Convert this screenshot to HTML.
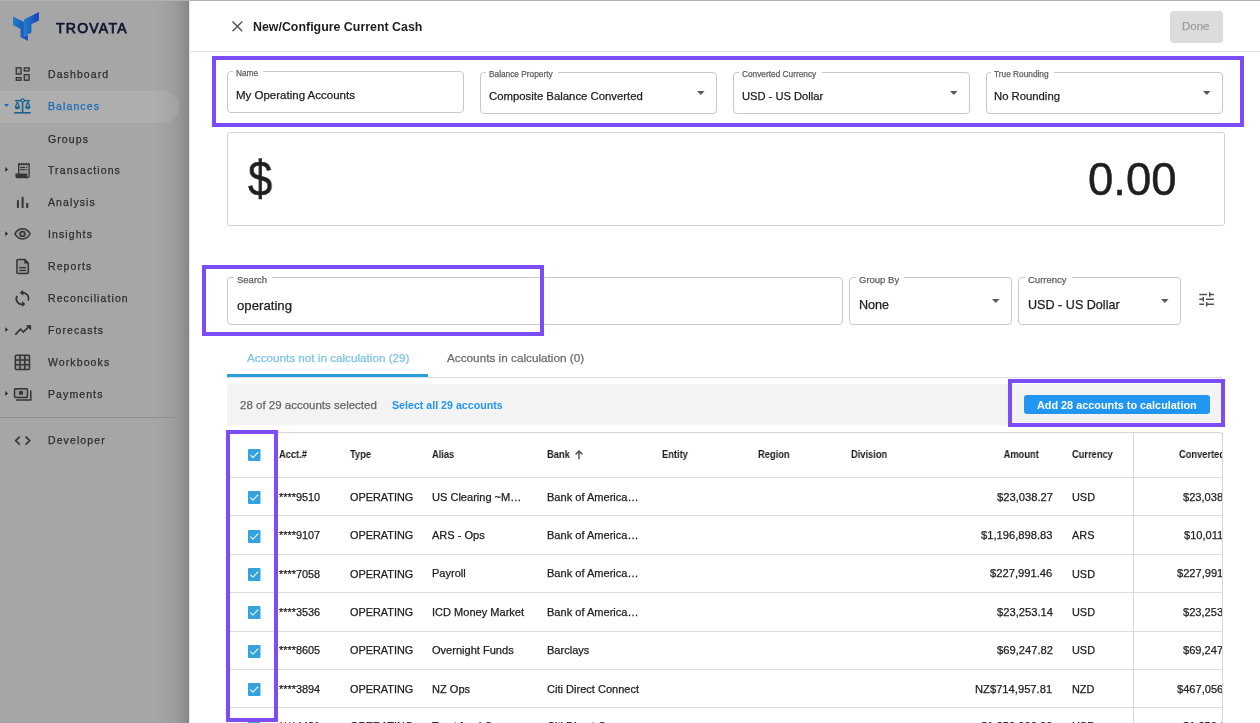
<!DOCTYPE html>
<html><head><meta charset="utf-8"><style>
html,body{margin:0;padding:0;}
body{width:1260px;height:723px;overflow:hidden;position:relative;background:#fff;font-family:"Liberation Sans", sans-serif;}
.t{position:absolute;white-space:nowrap;will-change:transform;}
.n{-webkit-text-stroke:0.25px currentColor;}
.b{position:absolute;}
</style></head><body>
<div class="b" style="left:0;top:0;width:189px;height:723px;background:linear-gradient(to right,#a6a6a6 0px,#a6a6a6 155px,#a2a2a2 165px,#999 178px,#8c8c8c 186px,#858585 189px);"></div>
<div class="b" style="left:0;top:91px;width:179px;height:32px;background:rgba(255,255,255,0.09);border-radius:0 16px 16px 0;"></div>
<svg class="b" style="left:0;top:0" width="60" height="50" viewBox="0 0 60 50">
<defs>
<linearGradient id="g1" x1="0" y1="0" x2="1" y2="0"><stop offset="0" stop-color="#1a7fc6"/><stop offset="1" stop-color="#1f48c2"/></linearGradient>
<linearGradient id="g2" x1="0" y1="0" x2="1" y2="0"><stop offset="0" stop-color="#1b82c6"/><stop offset="1" stop-color="#1f3fc0"/></linearGradient>
</defs>
<polygon fill="url(#g1)" points="13,16.5 23.9,21.9 23.9,35.9 27.9,34.9 27.9,40.9 20.5,36.9 20.5,28.9 13,24.9"/>
<polygon fill="url(#g2)" points="23.9,19.5 38.9,12 38.9,20.5 31.4,24.2 31.4,32.7 23.9,35.9"/>
</svg>
<div class="t n" style="left:56px;top:21.15px;font-size:14px;line-height:14px;font-weight:400;color:#0f1a30;letter-spacing:1.25px;-webkit-text-stroke:0.75px currentColor;">TROVATA</div>
<div class="t n" style="left:48.3px;top:69.11px;font-size:10.5px;line-height:10.5px;font-weight:400;color:#2e2e2e;letter-spacing:1.1px;">Dashboard</div>
<div class="t n" style="left:48.3px;top:101.11px;font-size:10.5px;line-height:10.5px;font-weight:400;color:#1b6cbd;letter-spacing:1.1px;">Balances</div>
<div class="t n" style="left:48.3px;top:134.11px;font-size:10.5px;line-height:10.5px;font-weight:400;color:#2e2e2e;letter-spacing:1.1px;">Groups</div>
<div class="t n" style="left:48.3px;top:165.11px;font-size:10.5px;line-height:10.5px;font-weight:400;color:#2e2e2e;letter-spacing:1.1px;">Transactions</div>
<div class="t n" style="left:48.3px;top:197.11px;font-size:10.5px;line-height:10.5px;font-weight:400;color:#2e2e2e;letter-spacing:1.1px;">Analysis</div>
<div class="t n" style="left:48.3px;top:229.11px;font-size:10.5px;line-height:10.5px;font-weight:400;color:#2e2e2e;letter-spacing:1.1px;">Insights</div>
<div class="t n" style="left:48.3px;top:261.11px;font-size:10.5px;line-height:10.5px;font-weight:400;color:#2e2e2e;letter-spacing:1.1px;">Reports</div>
<div class="t n" style="left:48.3px;top:293.11px;font-size:10.5px;line-height:10.5px;font-weight:400;color:#2e2e2e;letter-spacing:1.1px;">Reconciliation</div>
<div class="t n" style="left:48.3px;top:325.11px;font-size:10.5px;line-height:10.5px;font-weight:400;color:#2e2e2e;letter-spacing:1.1px;">Forecasts</div>
<div class="t n" style="left:48.3px;top:357.11px;font-size:10.5px;line-height:10.5px;font-weight:400;color:#2e2e2e;letter-spacing:1.1px;">Workbooks</div>
<div class="t n" style="left:48.3px;top:389.11px;font-size:10.5px;line-height:10.5px;font-weight:400;color:#2e2e2e;letter-spacing:1.1px;">Payments</div>
<div class="t n" style="left:48.3px;top:435.11px;font-size:10.5px;line-height:10.5px;font-weight:400;color:#2e2e2e;letter-spacing:1.1px;">Developer</div>
<svg class="b" style="left:0;top:0" width="40" height="460" viewBox="0 0 40 460">
<!-- dashboard -->
<g fill="#353535" fill-opacity="0.13" stroke="#353535" stroke-width="1.3">
<rect x="16.25" y="67.85" width="4.8" height="6.2"/><rect x="24.25" y="67.85" width="4.8" height="3.1"/>
<rect x="16.25" y="77.65" width="4.8" height="2.6"/><rect x="24.25" y="74.65" width="4.8" height="5.6"/>
</g>
<!-- balances scale -->
<g fill="#18648f">
<path d="M4.1,104.1 L9,104.1 L6.55,107 Z" fill="#1c66c4"/>
<rect x="14.2" y="112" width="16.5" height="1.6"/>
<rect x="21.8" y="100.5" width="1.6" height="12"/>
<rect x="15.1" y="99.9" width="14.9" height="1.5"/>
</g>
<g fill="none" stroke="#18648f" stroke-width="1.2">
<circle cx="22.6" cy="100.5" r="1.7" fill="#aeaeae"/>
<path d="M17.4,101.8 L15.4,107 M17.4,101.8 L19.4,107"/>
<path d="M27.8,101.8 L25.8,107 M27.8,101.8 L29.8,107"/>
</g>
<g fill="#18648f">
<path d="M14.7,106.6 L20.1,106.6 A2.7,2.7 0 0 1 14.7,106.6 Z"/>
<path d="M25.1,106.6 L30.5,106.6 A2.7,2.7 0 0 1 25.1,106.6 Z"/>
</g>
<!-- carets -->
<g fill="#353535">
<path d="M5.2,167 L8.2,169.5 L5.2,172 Z"/>
<path d="M5.2,231.2 L8.2,233.7 L5.2,236.2 Z"/>
<path d="M5.2,327.3 L8.2,329.6 L5.2,331.9 Z"/>
<path d="M5.2,391 L8.2,393.5 L5.2,396 Z"/>
</g>
<!-- transactions receipt -->
<g fill="#353535">
<path d="M18.6,165 L28.6,165 L28.6,176.5 L27.6,176.5 L27.6,173.4 L18.6,173.4 Z" fill-opacity="0.13"/>
<path d="M18,163.9 L19.1,162.6 L20.3,163.9 L21.5,162.6 L22.7,163.9 L23.9,162.6 L25.1,163.9 L26.3,162.6 L27.5,163.9 L28.7,162.6 L29.8,163.9 L29.8,176 Q29.8,178.2 27.6,178.2 L17.3,178.2 Q15.4,178.2 15.4,176.3 L15.4,173.4 L18,173.4 Z M19.3,165.1 L19.3,173.4 L27.2,173.4 L27.2,176.8 L28.5,176.8 L28.5,165.1 Z" fill-rule="evenodd"/>
<rect x="20.3" y="166.8" width="4.8" height="1.15"/><rect x="26" y="166.8" width="1.2" height="1.15"/>
<rect x="20.3" y="169.1" width="4.8" height="1.15"/><rect x="26" y="169.1" width="1.2" height="1.15"/>
</g>
<!-- analysis -->
<g fill="#353535">
<rect x="16.9" y="200.2" width="2" height="7.7"/><rect x="21.6" y="196.9" width="2" height="11"/><rect x="26.2" y="203" width="2" height="4.9"/>
</g>
<!-- insights eye -->
<g fill="#353535" fill-opacity="0.13" stroke="#353535" stroke-width="1.45">
<path d="M14.9,233.8 C17,229.4 20,228.7 22.5,228.7 C25,228.7 28,229.4 30.1,233.8 C28,238.2 25,238.9 22.5,238.9 C20,238.9 17,238.2 14.9,233.8 Z"/>
<circle cx="22.5" cy="233.9" r="2.45"/>
</g>
<!-- reports -->
<g fill="#353535" fill-opacity="0.13" stroke="#353535" stroke-width="1.5" stroke-linejoin="round">
<path d="M17.8,259.4 L24.6,259.4 L28.3,263.1 L28.3,272.6 Q28.3,273.6 27.3,273.6 L17.8,273.6 Q16.9,273.6 16.9,272.6 L16.9,260.4 Q16.9,259.4 17.8,259.4 Z"/>
</g>
<g fill="#353535"><path d="M24.3,259.2 L28.5,263.4 L24.3,263.4 Z"/>
<rect x="19.3" y="267" width="6.6" height="1.3"/><rect x="19.3" y="269.8" width="6.6" height="1.3"/></g>
<!-- reconciliation -->
<g fill="none" stroke="#353535" stroke-width="1.75">
<path d="M21.8,292.9 A5.6,5.6 0 0 1 28.1,300.5"/>
<path d="M17.1,295.9 A5.6,5.6 0 0 0 23.4,304.1"/>
</g>
<g fill="#353535">
<path d="M19.7,292.7 L23.1,289.7 L23.3,295.8 Z"/>
<path d="M25.4,303.9 L22,300.9 L21.9,307 Z"/>
</g>
<!-- forecasts -->
<g fill="none" stroke="#353535" stroke-width="1.7">
<path d="M15.3,334.6 L20.5,329.2 L23.3,332 L29.6,325.9"/>
</g>
<g fill="#353535"><path d="M25.6,325.2 L31.1,325.2 L31.1,330.6 Z"/></g>
<!-- workbooks -->
<g fill="#353535" fill-opacity="0.13" stroke="#353535" stroke-width="1.5">
<rect x="15.3" y="355.3" width="14.2" height="14.2" rx="1"/>
<path d="M20,355.3 V369.5 M24.8,355.3 V369.5 M15.3,360 H29.5 M15.3,364.8 H29.5"/>
</g>
<!-- payments -->
<g fill="none" stroke="#353535" stroke-width="1.5">
<rect x="14.5" y="388.7" width="13" height="8.7" rx="0.8" fill="#353535" fill-opacity="0.13"/>
<path d="M16.2,400.1 H30.8 V390.6"/>
</g>
<g fill="#353535"><circle cx="21" cy="392.9" r="2.15"/></g>
<!-- developer -->
<g fill="none" stroke="#353535" stroke-width="1.6">
<path d="M19.8,436.6 L15.7,440.6 L19.8,444.6"/>
<path d="M25.6,436.6 L29.7,440.6 L25.6,444.6"/>
</g>
</svg>
<div class="b" style="left:0px;top:417px;width:177px;height:1px;background:#8f8f8f;"></div>
<div class="b" style="left:0px;top:0px;width:1260px;height:1px;background:#b0b0b0;"></div>
<div class="b" style="left:189px;top:1px;width:1071px;height:722px;background:#fff;"></div>
<div class="b" style="left:189px;top:1px;width:1px;height:722px;background:#e8e8e8;"></div>
<svg class="b" style="left:230px;top:19px" width="15" height="15" viewBox="0 0 15 15"><path d="M2.5,2.5 L12.3,12.3 M12.3,2.5 L2.5,12.3" stroke="#555" stroke-width="1.45" fill="none"/></svg>
<div class="t" style="left:253.3px;top:20.50px;font-size:12.4px;line-height:12.4px;font-weight:700;color:#1e1e1e;">New/Configure Current Cash</div>
<div class="b" style="left:1170px;top:11px;width:53px;height:32px;background:#dcdcdc;border-radius:4px;"></div>
<div class="t n" style="left:1182.3px;top:20.97px;font-size:11.5px;line-height:11.5px;font-weight:400;color:#9e9e9e;">Done</div>
<div class="b" style="left:190px;top:51px;width:1070px;height:1px;background:#e3e3e3;"></div>
<div class="b" style="left:212px;top:56px;width:1032px;height:71px;border:4px solid #7b4cf7;box-sizing:border-box;"></div>
<div class="b" style="left:227px;top:71px;width:237px;height:42px;border:1px solid #c9c9c9;border-radius:4px;box-sizing:border-box;"></div>
<div class="t" style="left:233px;top:67px;height:8px;padding:0 4.5px 0 3.5px;background:#fff;font-size:1px;">&nbsp;<span style="visibility:hidden;font-size:8.3px">Name</span></div>
<div class="t n" style="left:235.8px;top:68.97px;font-size:8.3px;line-height:8.3px;font-weight:400;color:#5f5f5f;">Name</div>
<div class="t n" style="left:235.8px;top:90.27px;font-size:11.5px;line-height:11.5px;font-weight:400;color:#1e1e1e;">My Operating Accounts</div>
<div class="b" style="left:480px;top:72px;width:237px;height:42px;border:1px solid #c9c9c9;border-radius:4px;box-sizing:border-box;"></div>
<div class="t" style="left:486px;top:68px;height:8px;padding:0 4.5px 0 3.5px;background:#fff;font-size:1px;">&nbsp;<span style="visibility:hidden;font-size:8.3px">Balance Property</span></div>
<div class="t n" style="left:488.8px;top:69.97px;font-size:8.3px;line-height:8.3px;font-weight:400;color:#5f5f5f;">Balance Property</div>
<div class="t n" style="left:488.8px;top:91.19px;font-size:11.35px;line-height:11.35px;font-weight:400;color:#1e1e1e;">Composite Balance Converted</div>
<svg class="b" style="left:697.4px;top:90.9px" width="8" height="5" viewBox="0 0 8 5"><path d="M0,0 L7.6,0 L3.8,4 Z" fill="#5a5a5a"/></svg>
<div class="b" style="left:733px;top:72px;width:237px;height:42px;border:1px solid #c9c9c9;border-radius:4px;box-sizing:border-box;"></div>
<div class="t" style="left:739px;top:68px;height:8px;padding:0 4.5px 0 3.5px;background:#fff;font-size:1px;">&nbsp;<span style="visibility:hidden;font-size:8.3px">Converted Currency</span></div>
<div class="t n" style="left:741.8px;top:69.97px;font-size:8.3px;line-height:8.3px;font-weight:400;color:#5f5f5f;">Converted Currency</div>
<div class="t n" style="left:741.8px;top:91.36px;font-size:11.15px;line-height:11.15px;font-weight:400;color:#1e1e1e;">USD - US Dollar</div>
<svg class="b" style="left:950.4px;top:90.9px" width="8" height="5" viewBox="0 0 8 5"><path d="M0,0 L7.6,0 L3.8,4 Z" fill="#5a5a5a"/></svg>
<div class="b" style="left:986px;top:72px;width:237px;height:42px;border:1px solid #c9c9c9;border-radius:4px;box-sizing:border-box;"></div>
<div class="t" style="left:991.2px;top:68px;height:8px;padding:0 4.5px 0 3.5px;background:#fff;font-size:1px;">&nbsp;<span style="visibility:hidden;font-size:8.3px">True Rounding</span></div>
<div class="t n" style="left:994.0px;top:69.97px;font-size:8.3px;line-height:8.3px;font-weight:400;color:#5f5f5f;">True Rounding</div>
<div class="t n" style="left:994.0px;top:91.23px;font-size:11.3px;line-height:11.3px;font-weight:400;color:#1e1e1e;">No Rounding</div>
<svg class="b" style="left:1203.4px;top:90.9px" width="8" height="5" viewBox="0 0 8 5"><path d="M0,0 L7.6,0 L3.8,4 Z" fill="#5a5a5a"/></svg>
<div class="b" style="left:227px;top:132px;width:998px;height:94px;border:1px solid #d4d4d4;border-radius:3px;box-sizing:border-box;"></div>
<div class="t n" style="left:247.5px;top:154.18px;font-size:50px;line-height:50px;font-weight:400;color:#1f1f1f;transform:scaleX(0.87);transform-origin:0 0;-webkit-text-stroke:0.6px currentColor;">$</div>
<div class="t n" style="right:83.20000000000005px;top:156.98px;font-size:45.5px;line-height:45.5px;font-weight:400;color:#1f1f1f;-webkit-text-stroke:0.5px currentColor;">0.00</div>
<div class="b" style="left:227px;top:277px;width:616px;height:48px;border:1px solid #c9c9c9;border-radius:4px;box-sizing:border-box;"></div>
<div class="t" style="left:234px;top:273px;height:8px;padding:0 4.5px 0 3.5px;background:#fff;font-size:1px;">&nbsp;<span style="visibility:hidden;font-size:9.5px">Search</span></div>
<div class="t n" style="left:236.8px;top:274.96px;font-size:9.5px;line-height:9.5px;font-weight:400;color:#5f5f5f;">Search</div>
<div class="t n" style="left:236.8px;top:298.63px;font-size:13.2px;line-height:13.2px;font-weight:400;color:#1e1e1e;">operating</div>
<div class="b" style="left:849px;top:277px;width:163px;height:48px;border:1px solid #c9c9c9;border-radius:4px;box-sizing:border-box;"></div>
<div class="t" style="left:856px;top:273px;height:8px;padding:0 4.5px 0 3.5px;background:#fff;font-size:1px;">&nbsp;<span style="visibility:hidden;font-size:9.5px">Group By</span></div>
<div class="t n" style="left:858.8px;top:274.96px;font-size:9.5px;line-height:9.5px;font-weight:400;color:#5f5f5f;">Group By</div>
<div class="t n" style="left:858.8px;top:299.03px;font-size:12.6px;line-height:12.6px;font-weight:400;color:#1e1e1e;">None</div>
<svg class="b" style="left:992.4px;top:299px" width="8" height="5" viewBox="0 0 8 5"><path d="M0,0 L7.6,0 L3.8,4 Z" fill="#5a5a5a"/></svg>
<div class="b" style="left:1018px;top:277px;width:163px;height:48px;border:1px solid #c9c9c9;border-radius:4px;box-sizing:border-box;"></div>
<div class="t" style="left:1025px;top:273px;height:8px;padding:0 4.5px 0 3.5px;background:#fff;font-size:1px;">&nbsp;<span style="visibility:hidden;font-size:9.5px">Currency</span></div>
<div class="t n" style="left:1027.8px;top:274.96px;font-size:9.5px;line-height:9.5px;font-weight:400;color:#5f5f5f;">Currency</div>
<div class="t n" style="left:1027.8px;top:299.03px;font-size:12.6px;line-height:12.6px;font-weight:400;color:#1e1e1e;">USD - US Dollar</div>
<svg class="b" style="left:1161.4px;top:299px" width="8" height="5" viewBox="0 0 8 5"><path d="M0,0 L7.6,0 L3.8,4 Z" fill="#5a5a5a"/></svg>
<div class="b" style="left:202px;top:265px;width:342px;height:71px;border:4px solid #7b4cf7;box-sizing:border-box;"></div>
<svg class="b" style="left:1194px;top:288px" width="26" height="24" viewBox="0 0 26 24"><g stroke="#525252" stroke-width="1.5" fill="none">
<path d="M5.3,6.5 H13 M15.75,4.2 V8.8 M15.75,6.5 H19.9"/>
<path d="M5.3,11.3 H9.25 M9.25,9.1 V13.6 M12.1,11.3 H19.9"/>
<path d="M5.3,16.2 H10 M12.65,14 V18.6 M12.65,16.2 H19.9"/>
</g></svg>
<div class="t n" style="left:246.5px;top:352.30px;font-size:11.7px;line-height:11.7px;font-weight:400;color:#7dc3ea;">Accounts not in calculation (29)</div>
<div class="t n" style="left:447px;top:352.25px;font-size:11.75px;line-height:11.75px;font-weight:400;color:#6b6b6b;">Accounts in calculation (0)</div>
<div class="b" style="left:227px;top:377px;width:996px;height:1px;background:#dedede;"></div>
<div class="b" style="left:227px;top:374px;width:201px;height:3px;background:#2a9ed9;"></div>
<div class="b" style="left:227px;top:384px;width:996px;height:41px;background:#f3f3f3;border-radius:2px;"></div>
<div class="t n" style="left:240.2px;top:400.27px;font-size:11.5px;line-height:11.5px;font-weight:400;color:#666;">28 of 29 accounts selected</div>
<div class="t" style="left:392px;top:400.48px;font-size:10.65px;line-height:10.65px;font-weight:700;color:#2196f3;">Select all 29 accounts</div>
<div class="b" style="left:1024px;top:395px;width:186px;height:19px;background:#2196f3;border-radius:3px;"></div>
<div class="t" style="left:1036.5px;top:400.32px;font-size:10.85px;line-height:10.85px;font-weight:700;color:#fff;">Add 28 accounts to calculation</div>
<div class="b" style="left:1008px;top:379px;width:217px;height:48px;border:4px solid #7b4cf7;box-sizing:border-box;"></div>
<div class="b" style="left:227px;top:432px;width:996px;height:328px;border:1px solid #d6d6d6;border-radius:4px;box-sizing:border-box;"></div>
<div class="b" style="left:1133px;top:433px;width:1px;height:290px;background:#d6d6d6;"></div>
<div class="b" style="left:228px;top:477px;width:994px;height:1px;background:#dcdcdc"></div>
<div class="b" style="left:228px;top:515.4px;width:994px;height:1px;background:#dcdcdc"></div>
<div class="b" style="left:228px;top:553.8px;width:994px;height:1px;background:#dcdcdc"></div>
<div class="b" style="left:228px;top:592.2px;width:994px;height:1px;background:#dcdcdc"></div>
<div class="b" style="left:228px;top:630.6px;width:994px;height:1px;background:#dcdcdc"></div>
<div class="b" style="left:228px;top:669px;width:994px;height:1px;background:#dcdcdc"></div>
<div class="b" style="left:228px;top:707.4px;width:994px;height:1px;background:#dcdcdc"></div>
<svg class="b" style="left:248px;top:449px" width="12.5" height="12" viewBox="0 0 12.5 12"><rect x="0" y="0" width="12.5" height="12" rx="1" fill="#34a3dd"/><path d="M2.4,6.2 L5,8.6 L10.2,3.2" stroke="#fff" stroke-width="1.1" fill="none"/></svg>
<div class="t" style="left:279px;top:450.34px;font-size:10px;line-height:10px;font-weight:700;color:#1a1a1a;transform:scaleX(0.93);transform-origin:0 0;">Acct.#</div>
<div class="t" style="left:350px;top:450.34px;font-size:10px;line-height:10px;font-weight:700;color:#1a1a1a;transform:scaleX(0.93);transform-origin:0 0;">Type</div>
<div class="t" style="left:431.5px;top:450.34px;font-size:10px;line-height:10px;font-weight:700;color:#1a1a1a;transform:scaleX(0.93);transform-origin:0 0;">Alias</div>
<div class="t" style="left:547px;top:450.34px;font-size:10px;line-height:10px;font-weight:700;color:#1a1a1a;transform:scaleX(0.93);transform-origin:0 0;">Bank</div>
<div class="t" style="left:662.3px;top:450.34px;font-size:10px;line-height:10px;font-weight:700;color:#1a1a1a;transform:scaleX(0.93);transform-origin:0 0;">Entity</div>
<div class="t" style="left:758.2px;top:450.34px;font-size:10px;line-height:10px;font-weight:700;color:#1a1a1a;transform:scaleX(0.93);transform-origin:0 0;">Region</div>
<div class="t" style="left:851px;top:450.34px;font-size:10px;line-height:10px;font-weight:700;color:#1a1a1a;transform:scaleX(0.93);transform-origin:0 0;">Division</div>
<div class="t" style="left:1072px;top:450.34px;font-size:10px;line-height:10px;font-weight:700;color:#1a1a1a;transform:scaleX(0.93);transform-origin:0 0;">Currency</div>
<div class="t" style="left:1178.5px;top:450.34px;font-size:10px;line-height:10px;font-weight:700;color:#1a1a1a;transform:scaleX(0.93);transform-origin:0 0;">Converted</div>
<div class="t" style="right:221.5px;top:450.34px;font-size:10px;line-height:10px;font-weight:700;color:#1a1a1a;transform:scaleX(0.93);transform-origin:100% 0;">Amount</div>
<svg class="b" style="left:574px;top:450px" width="10" height="10" viewBox="0 0 10 10"><path d="M5,1 V9.2 M1.6,4.4 L5,1 L8.4,4.4" stroke="#555" stroke-width="1.5" fill="none"/></svg>
<svg class="b" style="left:248px;top:491.2px" width="12.5" height="13" viewBox="0 0 12.5 13"><rect x="0" y="0" width="12.5" height="13" rx="1" fill="#34a3dd"/><path d="M2.4,6.7 L5,9.1 L10.2,3.7" stroke="#fff" stroke-width="1.1" fill="none"/></svg>
<div class="t n" style="left:278.8px;top:491.77px;font-size:10.9px;line-height:10.9px;font-weight:400;color:#222;">****9510</div>
<div class="t n" style="left:350px;top:491.77px;font-size:10.9px;line-height:10.9px;font-weight:400;color:#222;">OPERATING</div>
<div class="t n" style="left:431.5px;top:491.65px;font-size:11.05px;line-height:11.05px;font-weight:400;color:#222;">US Clearing ~M<span style="letter-spacing:0.6px">…</span></div>
<div class="t n" style="left:547px;top:491.65px;font-size:11.05px;line-height:11.05px;font-weight:400;color:#222;">Bank of America<span style="letter-spacing:0.6px">…</span></div>
<div class="t n" style="right:207.5px;top:491.52px;font-size:11.2px;line-height:11.2px;font-weight:400;color:#222;">$23,038.27</div>
<div class="t n" style="left:1072px;top:491.77px;font-size:10.9px;line-height:10.9px;font-weight:400;color:#222;">USD</div>
<div class="t n" style="right:21.700000000000045px;top:491.60px;font-size:11.1px;line-height:11.1px;font-weight:400;color:#222;">$23,038.27</div>
<svg class="b" style="left:248px;top:529.6px" width="12.5" height="13" viewBox="0 0 12.5 13"><rect x="0" y="0" width="12.5" height="13" rx="1" fill="#34a3dd"/><path d="M2.4,6.7 L5,9.1 L10.2,3.7" stroke="#fff" stroke-width="1.1" fill="none"/></svg>
<div class="t n" style="left:278.8px;top:530.17px;font-size:10.9px;line-height:10.9px;font-weight:400;color:#222;">****9107</div>
<div class="t n" style="left:350px;top:530.17px;font-size:10.9px;line-height:10.9px;font-weight:400;color:#222;">OPERATING</div>
<div class="t n" style="left:431.5px;top:530.05px;font-size:11.05px;line-height:11.05px;font-weight:400;color:#222;">ARS - Ops</div>
<div class="t n" style="left:547px;top:530.05px;font-size:11.05px;line-height:11.05px;font-weight:400;color:#222;">Bank of America<span style="letter-spacing:0.6px">…</span></div>
<div class="t n" style="right:207.5px;top:529.92px;font-size:11.2px;line-height:11.2px;font-weight:400;color:#222;">$1,196,898.83</div>
<div class="t n" style="left:1072px;top:530.17px;font-size:10.9px;line-height:10.9px;font-weight:400;color:#222;">ARS</div>
<div class="t n" style="right:21.700000000000045px;top:530.00px;font-size:11.1px;line-height:11.1px;font-weight:400;color:#222;">$10,011.53</div>
<svg class="b" style="left:248px;top:568.0px" width="12.5" height="13" viewBox="0 0 12.5 13"><rect x="0" y="0" width="12.5" height="13" rx="1" fill="#34a3dd"/><path d="M2.4,6.7 L5,9.1 L10.2,3.7" stroke="#fff" stroke-width="1.1" fill="none"/></svg>
<div class="t n" style="left:278.8px;top:568.57px;font-size:10.9px;line-height:10.9px;font-weight:400;color:#222;">****7058</div>
<div class="t n" style="left:350px;top:568.57px;font-size:10.9px;line-height:10.9px;font-weight:400;color:#222;">OPERATING</div>
<div class="t n" style="left:431.5px;top:568.45px;font-size:11.05px;line-height:11.05px;font-weight:400;color:#222;">Payroll</div>
<div class="t n" style="left:547px;top:568.45px;font-size:11.05px;line-height:11.05px;font-weight:400;color:#222;">Bank of America<span style="letter-spacing:0.6px">…</span></div>
<div class="t n" style="right:207.5px;top:568.32px;font-size:11.2px;line-height:11.2px;font-weight:400;color:#222;">$227,991.46</div>
<div class="t n" style="left:1072px;top:568.57px;font-size:10.9px;line-height:10.9px;font-weight:400;color:#222;">USD</div>
<div class="t n" style="right:21.700000000000045px;top:568.40px;font-size:11.1px;line-height:11.1px;font-weight:400;color:#222;">$227,991.46</div>
<svg class="b" style="left:248px;top:606.4000000000001px" width="12.5" height="13" viewBox="0 0 12.5 13"><rect x="0" y="0" width="12.5" height="13" rx="1" fill="#34a3dd"/><path d="M2.4,6.7 L5,9.1 L10.2,3.7" stroke="#fff" stroke-width="1.1" fill="none"/></svg>
<div class="t n" style="left:278.8px;top:606.97px;font-size:10.9px;line-height:10.9px;font-weight:400;color:#222;">****3536</div>
<div class="t n" style="left:350px;top:606.97px;font-size:10.9px;line-height:10.9px;font-weight:400;color:#222;">OPERATING</div>
<div class="t n" style="left:431.5px;top:606.85px;font-size:11.05px;line-height:11.05px;font-weight:400;color:#222;">ICD Money Market</div>
<div class="t n" style="left:547px;top:606.85px;font-size:11.05px;line-height:11.05px;font-weight:400;color:#222;">Bank of America<span style="letter-spacing:0.6px">…</span></div>
<div class="t n" style="right:207.5px;top:606.72px;font-size:11.2px;line-height:11.2px;font-weight:400;color:#222;">$23,253.14</div>
<div class="t n" style="left:1072px;top:606.97px;font-size:10.9px;line-height:10.9px;font-weight:400;color:#222;">USD</div>
<div class="t n" style="right:21.700000000000045px;top:606.80px;font-size:11.1px;line-height:11.1px;font-weight:400;color:#222;">$23,253.14</div>
<svg class="b" style="left:248px;top:644.8000000000001px" width="12.5" height="13" viewBox="0 0 12.5 13"><rect x="0" y="0" width="12.5" height="13" rx="1" fill="#34a3dd"/><path d="M2.4,6.7 L5,9.1 L10.2,3.7" stroke="#fff" stroke-width="1.1" fill="none"/></svg>
<div class="t n" style="left:278.8px;top:645.37px;font-size:10.9px;line-height:10.9px;font-weight:400;color:#222;">****8605</div>
<div class="t n" style="left:350px;top:645.37px;font-size:10.9px;line-height:10.9px;font-weight:400;color:#222;">OPERATING</div>
<div class="t n" style="left:431.5px;top:645.25px;font-size:11.05px;line-height:11.05px;font-weight:400;color:#222;">Overnight Funds</div>
<div class="t n" style="left:547px;top:645.25px;font-size:11.05px;line-height:11.05px;font-weight:400;color:#222;">Barclays</div>
<div class="t n" style="right:207.5px;top:645.12px;font-size:11.2px;line-height:11.2px;font-weight:400;color:#222;">$69,247.82</div>
<div class="t n" style="left:1072px;top:645.37px;font-size:10.9px;line-height:10.9px;font-weight:400;color:#222;">USD</div>
<div class="t n" style="right:21.700000000000045px;top:645.20px;font-size:11.1px;line-height:11.1px;font-weight:400;color:#222;">$69,247.82</div>
<svg class="b" style="left:248px;top:683.2px" width="12.5" height="13" viewBox="0 0 12.5 13"><rect x="0" y="0" width="12.5" height="13" rx="1" fill="#34a3dd"/><path d="M2.4,6.7 L5,9.1 L10.2,3.7" stroke="#fff" stroke-width="1.1" fill="none"/></svg>
<div class="t n" style="left:278.8px;top:683.77px;font-size:10.9px;line-height:10.9px;font-weight:400;color:#222;">****3894</div>
<div class="t n" style="left:350px;top:683.77px;font-size:10.9px;line-height:10.9px;font-weight:400;color:#222;">OPERATING</div>
<div class="t n" style="left:431.5px;top:683.65px;font-size:11.05px;line-height:11.05px;font-weight:400;color:#222;">NZ Ops</div>
<div class="t n" style="left:547px;top:683.65px;font-size:11.05px;line-height:11.05px;font-weight:400;color:#222;">Citi Direct Connect</div>
<div class="t n" style="right:207.5px;top:683.52px;font-size:11.2px;line-height:11.2px;font-weight:400;color:#222;">NZ$714,957.81</div>
<div class="t n" style="left:1072px;top:683.77px;font-size:10.9px;line-height:10.9px;font-weight:400;color:#222;">NZD</div>
<div class="t n" style="right:21.700000000000045px;top:683.60px;font-size:11.1px;line-height:11.1px;font-weight:400;color:#222;">$467,056.12</div>
<svg class="b" style="left:248px;top:721.6px" width="12.5" height="13" viewBox="0 0 12.5 13"><rect x="0" y="0" width="12.5" height="13" rx="1" fill="#34a3dd"/><path d="M2.4,6.7 L5,9.1 L10.2,3.7" stroke="#fff" stroke-width="1.1" fill="none"/></svg>
<div class="t n" style="left:278.8px;top:721.47px;font-size:10.9px;line-height:10.9px;font-weight:400;color:#222;">****4421</div>
<div class="t n" style="left:350px;top:721.47px;font-size:10.9px;line-height:10.9px;font-weight:400;color:#222;">OPERATING</div>
<div class="t n" style="left:431.5px;top:721.35px;font-size:11.05px;line-height:11.05px;font-weight:400;color:#222;">Trust fund Ops</div>
<div class="t n" style="left:547px;top:721.35px;font-size:11.05px;line-height:11.05px;font-weight:400;color:#222;">Citi Direct C<span style="letter-spacing:0.6px">…</span></div>
<div class="t n" style="right:207.5px;top:721.22px;font-size:11.2px;line-height:11.2px;font-weight:400;color:#222;">$1,250,000.00</div>
<div class="t n" style="left:1072px;top:721.47px;font-size:10.9px;line-height:10.9px;font-weight:400;color:#222;">USD</div>
<div class="t n" style="right:21.700000000000045px;top:721.30px;font-size:11.1px;line-height:11.1px;font-weight:400;color:#222;">$1,250,000</div>
<div class="b" style="left:1223px;top:432px;width:37px;height:291px;background:#fff;"></div>
<div class="b" style="left:1222px;top:433px;width:1px;height:290px;background:#d6d6d6;"></div>
<div class="b" style="left:226px;top:430px;width:52px;height:292px;border:4px solid #7b4cf7;box-sizing:border-box;"></div>
</body></html>
